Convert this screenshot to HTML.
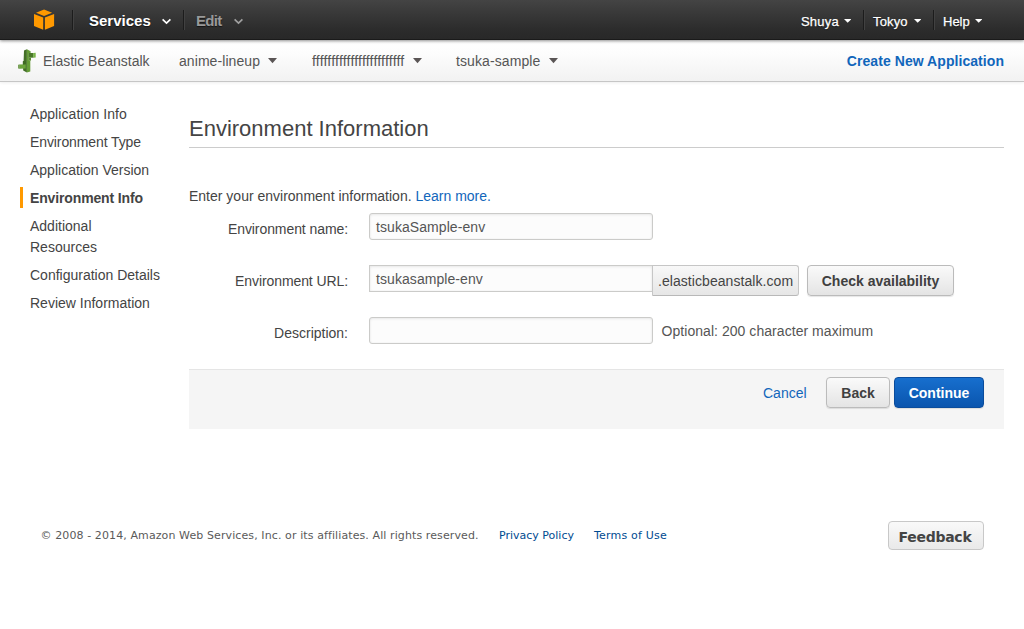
<!DOCTYPE html>
<html><head><meta charset="utf-8"><title>Elastic Beanstalk</title>
<style>
*{box-sizing:border-box}
html,body{margin:0;padding:0;background:#fff}
body{width:1024px;height:629px;overflow:hidden;position:relative;font-family:"Liberation Sans",Arial,sans-serif;font-size:14px;color:#444}
#top{position:absolute;left:0;top:0;width:1024px;height:40px;background:linear-gradient(#444 0,#3a3a3a 30%,#2c2c2c 75%,#282828 100%);border-bottom:1px solid #1a1a1a;box-shadow:0 1px 3px rgba(0,0,0,.45);z-index:2}
#top .t{position:absolute;top:14px;-webkit-text-stroke:.25px #fff;font-size:13px;line-height:16px;color:#fff;white-space:nowrap;text-shadow:0 1px 1px rgba(0,0,0,.6)}
#top .b{font-weight:bold;font-size:15px;top:13px;-webkit-text-stroke:0}
#top .sep{position:absolute;top:10px;height:20px;width:2px;background:#414141;border-left:1px solid #1c1c1c}
#sub{position:absolute;left:0;top:40px;width:1024px;height:42px;background:linear-gradient(#fff,#fdfdfd 30%,#f2f2f2);border-bottom:1px solid #c6c6c6;box-shadow:0 1px 3px rgba(0,0,0,.07)}
#sub .t{position:absolute;top:13px;font-variant-ligatures:none;font-size:14px;line-height:16px;color:#555;white-space:nowrap}
.car{position:absolute;width:0;height:0;border-left:4.5px solid transparent;border-right:4.5px solid transparent;border-top:4.7px solid #595454}
.wc{position:absolute;top:19px;width:0;height:0;border-left:3.7px solid transparent;border-right:3.7px solid transparent;border-top:4px solid #fff}
.cs{position:absolute}
.nav{position:absolute;left:30px;font-size:14px;line-height:21px;color:#444;white-space:nowrap}
h1{position:absolute;left:189px;top:114px;margin:0;font-size:22px;font-weight:normal;line-height:30px;color:#444;white-space:nowrap}
.hr{position:absolute;left:189px;top:147px;width:815px;height:1px;background:#ccc}
.lbl{position:absolute;font-size:14px;line-height:16px;color:#444;white-space:nowrap;text-align:right;width:160px;left:188px}
.inp{position:absolute;left:369px;width:284px;height:27px;border:1px solid #cbcbc9;border-radius:3px;background:#fcfcfc;box-shadow:inset 0 1px 3px rgba(0,0,0,.07),inset 0 0 2px rgba(0,0,0,.05);font-size:14px;line-height:16px;padding:5px 6px;color:#555;white-space:nowrap;letter-spacing:.07px}
.btn{position:absolute;border:1px solid #bbb;border-radius:4px;background:linear-gradient(#fafafa,#e4e4e4);font-weight:bold;font-size:14px;color:#404040;text-align:center;white-space:nowrap;box-shadow:0 1px 1px rgba(0,0,0,.1)}
a{color:#1166bb;text-decoration:none}
.ft{position:absolute;top:529px;font-family:"DejaVu Sans",Verdana,sans-serif;font-size:11px;line-height:14px;color:#5a5a5a;white-space:nowrap}
</style></head><body>
<div id="top">
 <svg style="position:absolute;left:30px;top:5px" width="30" height="30" viewBox="30 5 30 30"><polygon points="44.05,9.5 52.1,12.7 44.05,15.9 36,12.7" fill="#ff9900"/><polygon points="34,13.9 43.2,17.4 43.2,29.8 34,26.1" fill="#ff9900"/><polygon points="54.1,13.9 44.9,17.4 44.9,29.8 54.1,26.1" fill="#ff9900"/></svg>
 <div class="sep" style="left:72px"></div>
 <div class="t b" style="left:89px">Services</div>
 <div class="sep" style="left:183px"></div>
 <div class="t b" style="left:196px;color:#999;letter-spacing:-.7px">Edit</div>
 <svg style="position:absolute;left:161px;top:18px" width="11" height="8" viewBox="0 0 11 8"><path d="M1.6 1.3 L5.5 5 L9.4 1.3" fill="none" stroke="#fff" stroke-width="1.7"/></svg>
 <svg style="position:absolute;left:233px;top:18px" width="11" height="8" viewBox="0 0 11 8"><path d="M1.6 1.3 L5.5 5 L9.4 1.3" fill="none" stroke="#a0a0a0" stroke-width="1.7"/></svg>
 <svg class="cs" style="left:844px;top:19.3px" width="7.4" height="4" viewBox="0 0 7.4 4"><polygon points="0,0 7.4,0 3.7,3.8" fill="#fff"/></svg><svg class="cs" style="left:914px;top:19.3px" width="7.4" height="4" viewBox="0 0 7.4 4"><polygon points="0,0 7.4,0 3.7,3.8" fill="#fff"/></svg><svg class="cs" style="left:975px;top:19.3px" width="7.4" height="4" viewBox="0 0 7.4 4"><polygon points="0,0 7.4,0 3.7,3.8" fill="#fff"/></svg>
 <div class="sep" style="left:863px"></div>
 <div class="sep" style="left:933px"></div>
 <div class="t" style="left:801px;letter-spacing:.2px">Shuya</div>
 <div class="t" style="left:873px;letter-spacing:.15px">Tokyo</div>
 <div class="t" style="left:943px">Help</div>
</div>
<div id="sub">
 <div class="t" style="left:43px">Elastic Beanstalk</div>
 <div class="t" style="left:179px;letter-spacing:.07px">anime-lineup</div>
 <div class="t" style="left:312px;font-kerning:none;letter-spacing:-.05px">ffffffffffffffffffffffff</div>
 <div class="t" style="left:456px;letter-spacing:.1px">tsuka-sample</div>
 <svg class="cs" style="left:268.4px;top:17.8px" width="9" height="6" viewBox="0 0 9 6"><polygon points="0,0 9,0 4.5,5.3" fill="#5a5555"/></svg><svg class="cs" style="left:412.6px;top:17.8px" width="9" height="6" viewBox="0 0 9 6"><polygon points="0,0 9,0 4.5,5.3" fill="#5a5555"/></svg><svg class="cs" style="left:548.6px;top:17.8px" width="9" height="6" viewBox="0 0 9 6"><polygon points="0,0 9,0 4.5,5.3" fill="#5a5555"/></svg>
 <svg style="position:absolute;left:17px;top:8px" width="20" height="26" viewBox="17 48 20 26">
  <polygon points="26.9,49.2 24,50.6 23.6,61 22.9,61.3 22.9,64 23.2,70.6 26.9,72.6" fill="#436f27"/>
  <polygon points="26.9,49.2 30.6,51.2 30.6,53 28.8,53 28.8,60.6 30.3,60.6 30.3,71.5 26.9,72.6" fill="#659c37"/>
  <polygon points="28.6,53 33.5,53 33.5,57.7 28.6,57.7" fill="#4a792a"/>
  <polygon points="33.3,53 35.7,52.8 35.7,57.4 33.3,57.7" fill="#7ab648"/>
  <polygon points="28.6,57.7 31,57.7 31,60.6 28.6,60.6" fill="#5b8c33"/>
  <polygon points="19.5,64.6 25.7,64.2 25.7,68.4 19.5,68.7" fill="#6ca53c"/>
  <polygon points="18.2,64.8 19.6,64.6 19.6,68.7 18.2,68.4" fill="#5a8a33"/>
  <polygon points="22.9,61.3 25.7,61.3 25.7,64.2 22.9,64.4" fill="#3f6a24"/>
 </svg>
 <div class="t" style="right:20px;color:#1166bb;font-weight:bold;letter-spacing:.06px"><a>Create New Application</a></div>
</div>
<div class="nav" style="top:104px;letter-spacing:.07px">Application Info</div>
<div class="nav" style="top:132px;letter-spacing:-.1px">Environment Type</div>
<div class="nav" style="top:160px">Application Version</div>
<div class="nav" style="top:188px;font-weight:bold;letter-spacing:-.14px">Environment Info</div>
<div style="position:absolute;left:20px;top:187px;width:3px;height:21px;background:#ff9900"></div>
<div class="nav" style="top:216px">Additional<br>Resources</div>
<div class="nav" style="top:265px">Configuration Details</div>
<div class="nav" style="top:293px">Review Information</div>
<h1>Environment Information</h1>
<div class="hr"></div>
<div style="position:absolute;left:189px;top:188px;font-size:14px;line-height:16px;white-space:nowrap">Enter your environment information. <a>Learn more.</a></div>
<div class="lbl" style="top:221px;letter-spacing:-.08px">Environment name:</div>
<div class="inp" style="top:213px">tsukaSample-env</div>
<div class="lbl" style="top:273px;letter-spacing:-.09px">Environment URL:</div>
<div class="inp" style="top:265px;border-radius:0">tsukasample-env</div>
<div style="position:absolute;left:652px;top:265px;width:147px;height:31px;border:1px solid #c6c6c6;border-bottom-color:#b8b8b8;background:linear-gradient(#f8f8f8,#e6e6e6);font-size:14px;line-height:16px;padding:7px 0 0 5px;color:#444;border-radius:0 3px 3px 0;white-space:nowrap;letter-spacing:.06px">.elasticbeanstalk.com</div>
<div class="btn" style="left:807px;top:265px;width:147px;height:31px;line-height:30px">Check availability</div>
<div class="lbl" style="top:325px">Description:</div>
<div class="inp" style="top:317px"></div>
<div style="position:absolute;left:661.5px;top:323px;font-size:14px;line-height:16px;color:#555;white-space:nowrap;letter-spacing:.05px">Optional: 200 character maximum</div>
<div style="position:absolute;left:189px;top:369px;width:815px;height:60px;background:#f5f5f5;border-top:1px solid #e5e5e5"></div>
<div style="position:absolute;left:763px;top:385px;font-size:14px;line-height:16px"><a>Cancel</a></div>
<div class="btn" style="left:826px;top:377px;width:64px;height:31px;line-height:30px">Back</div>
<div class="btn" style="left:894px;top:377px;width:90px;height:31px;line-height:30px;background:linear-gradient(#176fce,#0a55ae);border-color:#0a4c9c;color:#fff">Continue</div>
<div class="ft" style="left:40.5px;letter-spacing:.1px">© 2008 - 2014, Amazon Web Services, Inc. or its affiliates. All rights reserved.</div>
<div class="ft" style="left:499px;color:#004b91">Privacy Policy</div>
<div class="ft" style="left:594px;color:#004b91;letter-spacing:.2px">Terms of Use</div>
<div class="btn" style="left:888px;top:521px;width:96px;height:29px;line-height:31px;padding-right:2px;font-family:'DejaVu Sans',Verdana,sans-serif;font-size:14px;letter-spacing:-.28px;color:#444;border-color:#c8c8c8;box-shadow:none;background:linear-gradient(#f9f9f9,#e9e9e9)">Feedback</div>
</body></html>
